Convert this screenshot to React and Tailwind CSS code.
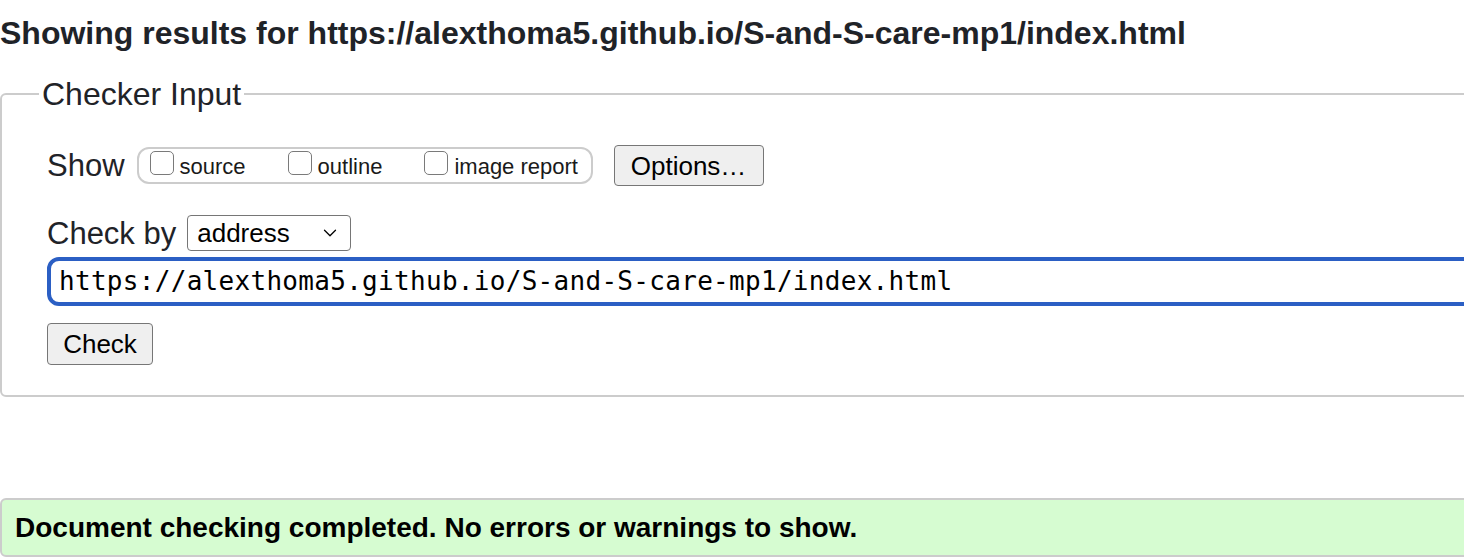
import { ChevronDown } from 'lucide-react';

const sans = "font-['Liberation_Sans',Arial,sans-serif]";

function Box({ label, gap }) {
  return (
    <label className={`flex items-center ${gap}`}>
      <span className="mb-[6px] h-[24px] w-[24px] rounded-[5px] border-[1.5px] border-[#7a7a7a] bg-white" />
      <span className="ml-[6px] mt-[2px] text-[22px] leading-none text-[#1a1a1a]">{label}</span>
    </label>
  );
}

export default function App() {
  const url = 'https://alexthoma5.github.io/S-and-S-care-mp1/index.html';
  return (
    <div className={`h-[559px] w-full overflow-hidden bg-white ${sans} text-[#1f2328]`}>
      <div className="w-[1520px]">
        <h2 className="pt-[16px] text-[32px] font-bold leading-[34px]">
          Showing results for {url}
        </h2>

        {/* Checker input fieldset */}
        <fieldset className="mt-[27px] rounded-[6px] border-2 border-[#cccccc] pb-[30px] pl-[45px] pr-0">
          <legend className="ml-[-8px] px-[3px] text-[32px] leading-[34px]">Checker Input</legend>

          <div className="mt-[34px] flex items-center">
            <span className="text-[31px] leading-none">Show</span>
            <div className="ml-[12px] flex h-[37px] w-[456px] items-center rounded-[12px] border-2 border-[#cccccc] pl-[11px]">
              <Box label="source" gap="" />
              <Box label="outline" gap="ml-[42px]" />
              <Box label="image report" gap="ml-[42px]" />
            </div>
            <button className="ml-[21px] h-[41px] w-[150px] rounded-[4px] border-[1.5px] border-[#767676] bg-[#efefef] text-[26px] leading-none text-black">
              Options…
            </button>
          </div>

          <div className="mt-[29px] flex items-center">
            <span className="text-[31px] leading-none">Check by</span>
            <div className="ml-[11px] flex h-[36px] w-[164px] items-center justify-between rounded-[4px] border-[1.5px] border-[#767676] pl-[9px] pr-[9px] text-[26px] leading-none text-black">
              <span>address</span>
              <ChevronDown className="h-[22px] w-[22px]" strokeWidth={1.4} />
            </div>
          </div>

          <div className="mt-[6px] flex h-[49px] w-[1480px] items-center rounded-[12px] border-[4px] border-[#2b5fc4] pl-[8px] font-['DejaVu_Sans_Mono',monospace] text-[26px] tracking-[0.3px] text-black">
            {url}
          </div>

          <button className="mt-[17px] h-[42px] w-[106px] rounded-[4px] border-[1.5px] border-[#767676] bg-[#efefef] text-[26px] leading-none text-black">
            Check
          </button>
        </fieldset>

        <div className="mt-[101px] flex h-[59px] items-center rounded-[6px] border-2 border-[#cccccc] bg-[#d6fcd1] pl-[13px] text-[28px] font-bold text-black">
          Document checking completed. No errors or warnings to show.
        </div>
      </div>
    </div>
  );
}
